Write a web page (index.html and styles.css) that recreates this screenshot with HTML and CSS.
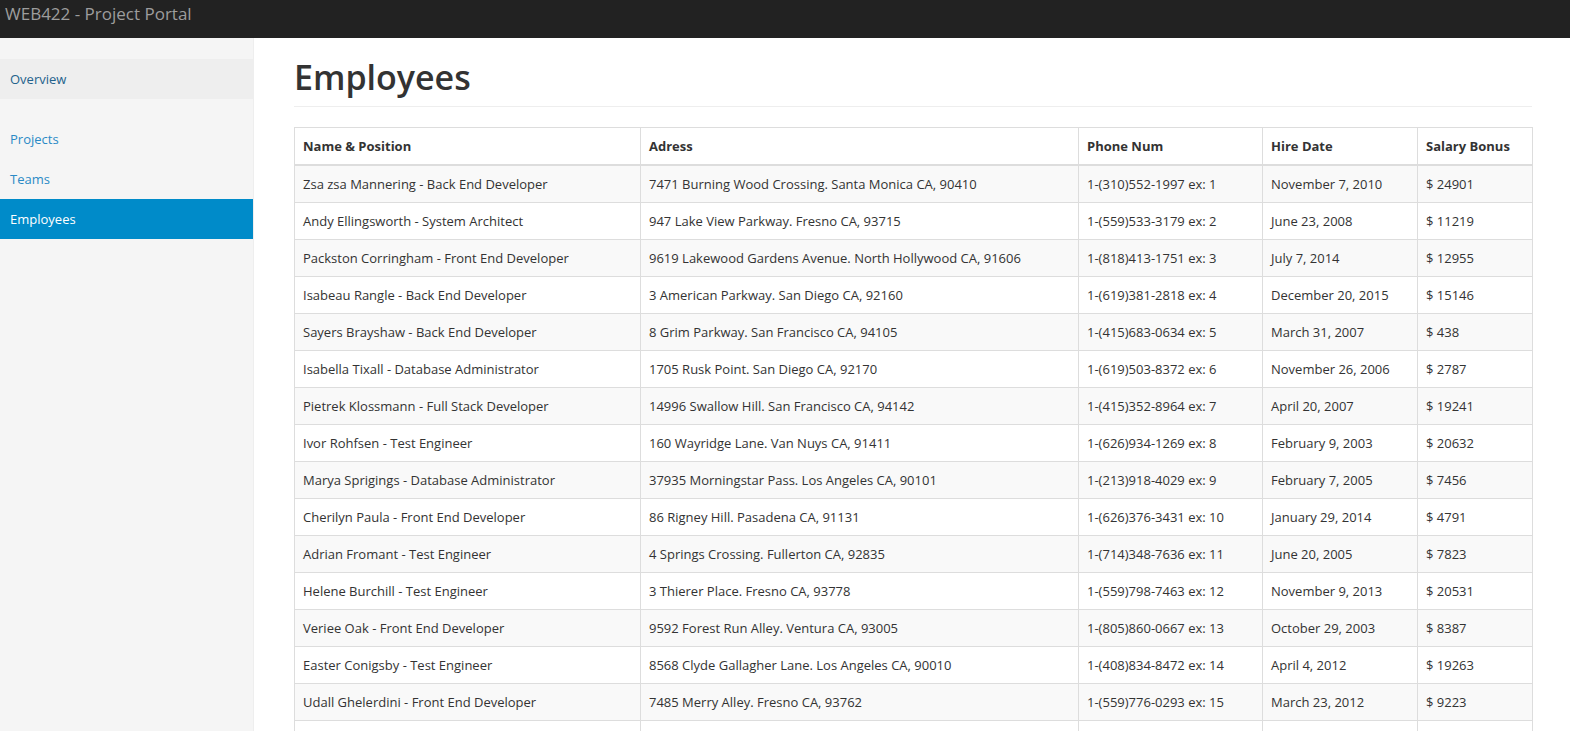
FILE: index.html
```html
<!DOCTYPE html>
<html lang="en">
<head>
<meta charset="utf-8">
<title>WEB422 - Project Portal</title>
<link rel="stylesheet" href="styles.css">
</head>
<body>
<header class="navbar">
  <a class="brand" href="#">WEB422 - Project Portal</a>
</header>
<div class="layout">
  <aside class="sidebar">
    <ul class="nav-group">
      <li><a class="nav-link overview" href="#">Overview</a></li>
    </ul>
    <ul class="nav-group">
      <li><a class="nav-link" href="#">Projects</a></li>
      <li><a class="nav-link" href="#">Teams</a></li>
      <li><a class="nav-link active" href="#">Employees</a></li>
    </ul>
  </aside>
  <main class="main">
    <div class="page-header"><h1>Employees</h1></div>
    <table class="table">
      <colgroup>
        <col class="c-name"><col class="c-addr"><col class="c-phone"><col class="c-date"><col class="c-bonus">
      </colgroup>
      <thead>
        <tr><th>Name &amp; Position</th><th>Adress</th><th>Phone Num</th><th>Hire Date</th><th>Salary Bonus</th></tr>
      </thead>
      <tbody>
        <tr><td>Zsa zsa Mannering - Back End Developer</td><td>7471 Burning Wood Crossing. Santa Monica CA, 90410</td><td>1-(310)552-1997 ex: 1</td><td>November 7, 2010</td><td>$ 24901</td></tr>
        <tr><td>Andy Ellingsworth - System Architect</td><td>947 Lake View Parkway. Fresno CA, 93715</td><td>1-(559)533-3179 ex: 2</td><td>June 23, 2008</td><td>$ 11219</td></tr>
        <tr><td>Packston Corringham - Front End Developer</td><td>9619 Lakewood Gardens Avenue. North Hollywood CA, 91606</td><td>1-(818)413-1751 ex: 3</td><td>July 7, 2014</td><td>$ 12955</td></tr>
        <tr><td>Isabeau Rangle - Back End Developer</td><td>3 American Parkway. San Diego CA, 92160</td><td>1-(619)381-2818 ex: 4</td><td>December 20, 2015</td><td>$ 15146</td></tr>
        <tr><td>Sayers Brayshaw - Back End Developer</td><td>8 Grim Parkway. San Francisco CA, 94105</td><td>1-(415)683-0634 ex: 5</td><td>March 31, 2007</td><td>$ 438</td></tr>
        <tr><td>Isabella Tixall - Database Administrator</td><td>1705 Rusk Point. San Diego CA, 92170</td><td>1-(619)503-8372 ex: 6</td><td>November 26, 2006</td><td>$ 2787</td></tr>
        <tr><td>Pietrek Klossmann - Full Stack Developer</td><td>14996 Swallow Hill. San Francisco CA, 94142</td><td>1-(415)352-8964 ex: 7</td><td>April 20, 2007</td><td>$ 19241</td></tr>
        <tr><td>Ivor Rohfsen - Test Engineer</td><td>160 Wayridge Lane. Van Nuys CA, 91411</td><td>1-(626)934-1269 ex: 8</td><td>February 9, 2003</td><td>$ 20632</td></tr>
        <tr><td>Marya Sprigings - Database Administrator</td><td>37935 Morningstar Pass. Los Angeles CA, 90101</td><td>1-(213)918-4029 ex: 9</td><td>February 7, 2005</td><td>$ 7456</td></tr>
        <tr><td>Cherilyn Paula - Front End Developer</td><td>86 Rigney Hill. Pasadena CA, 91131</td><td>1-(626)376-3431 ex: 10</td><td>January 29, 2014</td><td>$ 4791</td></tr>
        <tr><td>Adrian Fromant - Test Engineer</td><td>4 Springs Crossing. Fullerton CA, 92835</td><td>1-(714)348-7636 ex: 11</td><td>June 20, 2005</td><td>$ 7823</td></tr>
        <tr><td>Helene Burchill - Test Engineer</td><td>3 Thierer Place. Fresno CA, 93778</td><td>1-(559)798-7463 ex: 12</td><td>November 9, 2013</td><td>$ 20531</td></tr>
        <tr><td>Veriee Oak - Front End Developer</td><td>9592 Forest Run Alley. Ventura CA, 93005</td><td>1-(805)860-0667 ex: 13</td><td>October 29, 2003</td><td>$ 8387</td></tr>
        <tr><td>Easter Conigsby - Test Engineer</td><td>8568 Clyde Gallagher Lane. Los Angeles CA, 90010</td><td>1-(408)834-8472 ex: 14</td><td>April 4, 2012</td><td>$ 19263</td></tr>
        <tr><td>Udall Ghelerdini - Front End Developer</td><td>7485 Merry Alley. Fresno CA, 93762</td><td>1-(559)776-0293 ex: 15</td><td>March 23, 2012</td><td>$ 9223</td></tr>
        <tr><td>&nbsp;</td><td>&nbsp;</td><td>&nbsp;</td><td>&nbsp;</td><td>&nbsp;</td></tr>
      </tbody>
    </table>
  </main>
</div>
</body>
</html>
```
FILE: styles.css
```css
* { box-sizing: border-box; }
html, body { margin: 0; padding: 0; }
body {
  font-family: "Open Sans", "Noto Sans", "Liberation Sans", sans-serif;
  font-size: 13px;
  line-height: 20px;
  color: #333;
  background: #fff;
}
a { text-decoration: none; }

.navbar {
  height: 38px;
  background: #222;
  display: flex;
  align-items: center;
  padding: 0 5px;
}
.brand {
  color: #9d9d9d;
  font-size: 17px;
  line-height: 24px;
  margin-top: -10px;
}

.layout {
  display: flex;
  min-height: calc(100vh - 38px);
}
.sidebar {
  width: 254px;
  flex: 0 0 254px;
  background: #f5f5f5;
  border-right: 1px solid #eee;
  padding-top: 21px;
}
.nav-group {
  list-style: none;
  margin: 0 0 20px 0;
  padding: 0;
}
.nav-link {
  display: block;
  padding: 10px 10px;
  line-height: 20px;
  color: #2a8ac6;
}
.nav-link.overview {
  background: #eee;
  color: #23628c;
}
.nav-link.active {
  background: #008bc9;
  color: #fff;
}

.main {
  flex: 1;
  padding: 20px 38px 0 40px;
  min-width: 0;
}
.page-header {
  border-bottom: 1px solid #eee;
  padding-bottom: 9px;
  margin-bottom: 20px;
}
.page-header h1 {
  margin: 0;
  font-size: 34px;
  line-height: 39px;
  font-weight: 600;
  color: #333;
}

.table {
  width: 100%;
  border-collapse: collapse;
  border: 1px solid #ddd;
  table-layout: fixed;
}
.c-name { width: 346px; }
.c-addr { width: 438px; }
.c-phone { width: 184px; }
.c-date { width: 155px; }
.c-bonus { width: 115px; }
.table th,
.table td {
  border: 1px solid #ddd;
  padding: 8px;
  line-height: 20px;
  text-align: left;
  white-space: nowrap;
  overflow: hidden;
}
.table th {
  font-weight: 700;
  border-bottom: 2px solid #ddd;
}
.table tbody tr:nth-child(odd) {
  background: #f9f9f9;
}
```
